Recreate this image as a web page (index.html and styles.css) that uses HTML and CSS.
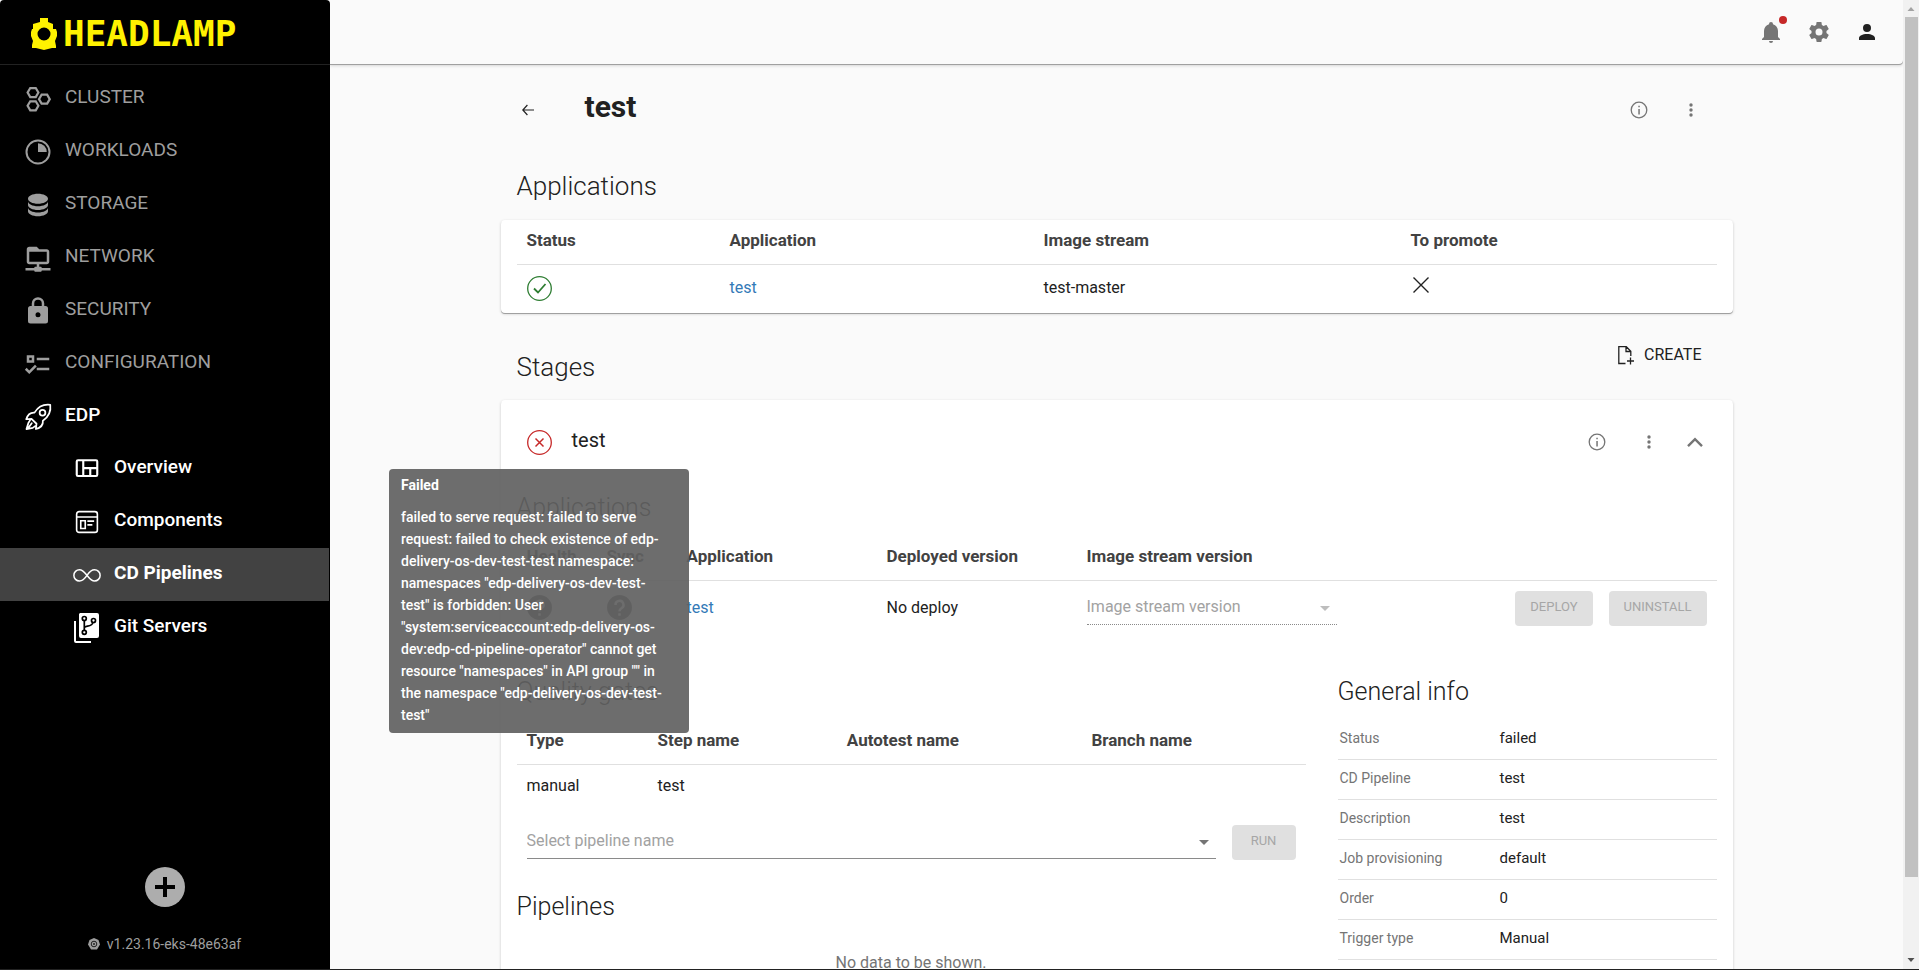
FILE: index.html
```html
<!DOCTYPE html>
<html lang="en">
<head>
<meta charset="utf-8">
<title>Headlamp - CD Pipelines</title>
<link rel="stylesheet" href="styles.css">
</head>
<body>
<div class="app">
  <aside class="sidebar">
    <div class="brand">
      <svg class="brand-mark" viewBox="0 0 26 32" aria-hidden="true"><path fill="#fff200" fill-rule="evenodd" d="M9 0h8v4l5 2v5h3l1 3v4l-2 5 1 5v2h-4l-8 2-8-2H1v-3l1-4-2-5v-4l1-3h1V6l7-2zM13 9.500a6.500 6.500 0 1 0 0 13 6.500 6.500 0 1 0 0-13z"/></svg>
      <span class="brand-name">HEADLAMP</span>
    </div>
    <nav class="nav" aria-label="Main">
      <a class="nav-item" href="#"><svg class="nav-icon" viewBox="0 0 24 24" fill="none" stroke="currentColor" stroke-width="1.800"><path d="M5.800 3.200h4.400l2.100 3.600-2.100 3.600H5.800L3.700 6.800zM5.800 13.800h4.400l2.100 3.600-2.100 3.600H5.800l-2.100-3.600zM14.900 8.500h4.400l2.100 3.600-2.100 3.600h-4.400l-2.100-3.600z"/></svg><span class="nav-text">CLUSTER</span></a>
      <a class="nav-item" href="#"><svg class="nav-icon" viewBox="0 0 24 24"><circle cx="12" cy="12" r="9.200" fill="none" stroke="currentColor" stroke-width="1.600"/><path fill="currentColor" d="M12 12V5a7 7 0 0 1 7 7z"/></svg><span class="nav-text">WORKLOADS</span></a>
      <a class="nav-item" href="#"><svg class="nav-icon" viewBox="0 0 24 24" fill="currentColor"><path d="M12,3C7.580,3 4,4.790 4,7C4,9.210 7.580,11 12,11C16.420,11 20,9.210 20,7C20,4.790 16.420,3 12,3M4,9V12C4,14.210 7.580,16 12,16C16.420,16 20,14.210 20,12V9C20,11.210 16.420,13 12,13C7.580,13 4,11.210 4,9M4,14V17C4,19.210 7.580,21 12,21C16.420,21 20,19.210 20,17V14C20,16.210 16.420,18 12,18C7.580,18 4,16.210 4,14Z"/></svg><span class="nav-text">STORAGE</span></a>
      <a class="nav-item" href="#"><svg class="nav-icon" viewBox="0 0 24 24" fill="currentColor"><path d="M15 20C15 19.450 14.550 19 14 19H13V17H19C20.110 17 21 16.110 21 15V7C21 5.900 20.110 5 19 5H13L11 3H5C3.900 3 3 3.900 3 5V15C3 16.110 3.900 17 5 17H11V19H10C9.450 19 9 19.450 9 20H2V22H9C9 22.550 9.450 23 10 23H14C14.550 23 15 22.550 15 22H22V20H15M5 15V7H19V15H5Z"/></svg><span class="nav-text">NETWORK</span></a>
      <a class="nav-item" href="#"><svg class="nav-icon" viewBox="0 0 24 24" fill="currentColor"><path d="M12,17A2,2 0 0,0 14,15C14,13.890 13.100,13 12,13A2,2 0 0,0 10,15A2,2 0 0,0 12,17M18,8A2,2 0 0,1 20,10V20A2,2 0 0,1 18,22H6A2,2 0 0,1 4,20V10C4,8.890 4.900,8 6,8H7V6A5,5 0 0,1 12,1A5,5 0 0,1 17,6V8H18M12,3A3,3 0 0,0 9,6V8H15V6A3,3 0 0,0 12,3Z"/></svg><span class="nav-text">SECURITY</span></a>
      <a class="nav-item" href="#"><svg class="nav-icon" viewBox="0 0 24 24" fill="currentColor"><path d="M3,5H9V11H3V5M5,7V9H7V7H5M11,7H21V9H11V7M11,15H21V17H11V15M5,20L1.500,16.500L2.910,15.090L5,17.170L9.590,12.590L11,14L5,20Z"/></svg><span class="nav-text">CONFIGURATION</span></a>
      <a class="nav-item nav-open" href="#"><svg class="nav-icon" viewBox="0 0 24 24" fill="none" stroke="currentColor" stroke-width="1.400" stroke-linejoin="round" stroke-linecap="round"><path d="M21.800 2.300c-5-.6-9.700 1.600-12.600 6.200-3-.2-5.300.9-6.600 5.300l4.200-.3 4 3.900-.5 4.200c4.500-1.200 5.900-3.700 5.600-6.600 4.400-3 6.600-7.600 5.900-12.700zM5.700 14.500l-1.400 2.300-1.500 4.900 5-1 2.200-1.600M4 21l3-4"/><circle cx="15.600" cy="8.500" r="2.300"/></svg><span class="nav-text">EDP</span></a>
      <a class="nav-item nav-sub" href="#"><svg class="nav-icon" viewBox="0 0 24 24" fill="none" stroke="currentColor" stroke-width="1.700"><rect x="3.800" y="5" width="16.400" height="12.600" rx="1"/><path d="M9 5v12.600M9 11.300h11.200M14.600 11.300v6.300"/></svg><span class="nav-text">Overview</span></a>
      <a class="nav-item nav-sub" href="#"><svg class="nav-icon" viewBox="0 0 24 24" fill="none" stroke="currentColor" stroke-width="1.300"><rect x="3.700" y="3.700" width="16.600" height="16.600" rx="2"/><path d="M3.700 8h16.600M7 11h3.600v6.200H7zM12.300 11.300h5.400M12.300 14.300h4"/></svg><span class="nav-text">Components</span></a>
      <a class="nav-item nav-sub nav-current" href="#" aria-current="page"><svg class="nav-icon" viewBox="0 0 24 24" fill="none" stroke="currentColor" stroke-width="1.200"><path d="M12 12.300C10 9.800 8.600 7.800 6 7.800a4.500 4.500 0 1 0 0 9c2.600 0 4.300-2 6-4.500s3.400-4.500 6-4.500a4.500 4.500 0 1 1 0 9c-2.600 0-4-2-6-4.500z"/></svg><span class="nav-text">CD Pipelines</span></a>
      <a class="nav-item nav-sub" href="#"><svg class="nav-icon" viewBox="0 0 30 30"><path fill="currentColor" d="M8 0h17a2 2 0 0 1 2 2v21a2 2 0 0 1-2 2H9a2 2 0 0 1-2-2V1zM2 8h2v20h15v2H4a2 2 0 0 1-2-2z"/><g fill="none" stroke="#000" stroke-width="1.700"><circle cx="12.300" cy="5.500" r="2"/><circle cx="12.300" cy="19.300" r="2"/><circle cx="21.500" cy="7.500" r="2"/><path d="M12.300 7.500v9.800M12.300 15c0-2.500 8-1 8.600-5.500"/></g></svg><span class="nav-text">Git Servers</span></a>
    </nav>
    <footer class="sidebar-foot">
      <button class="add" type="button" aria-label="Add cluster"><svg class="add-icon" viewBox="0 0 20 20"><path fill="#000" d="M8 0h4v8h8v4h-8v8H8v-8H0V8h8z"/></svg></button>
      <div class="version">
        <svg class="version-icon" viewBox="0 0 12 12"><path fill="currentColor" d="M6 0l4.500 2L12 6.500 9 11.500H3L0 6.500 1.500 2z"/><circle cx="6" cy="6" r="2.800" fill="none" stroke="#222" stroke-width="1"/><circle cx="6" cy="6" r="1" fill="#222"/></svg>
        <span>v1.23.16-eks-48e63af</span>
      </div>
    </footer>
  </aside>

  <div class="page">
    <header class="topbar">
      <button class="top-btn" type="button" aria-label="Notifications"><svg class="icon-24" viewBox="0 0 24 24" fill="currentColor"><path d="M21,19V20H3V19L5,17V11C5,7.900 7.030,5.170 10,4.290C10,4.190 10,4.100 10,4A2,2 0 0,1 12,2A2,2 0 0,1 14,4C14,4.100 14,4.190 14,4.290C16.970,5.170 19,7.900 19,11V17L21,19M14,21A2,2 0 0,1 12,23A2,2 0 0,1 10,21"/></svg><span class="badge"></span></button>
      <button class="top-btn" type="button" aria-label="Settings"><svg class="icon-24" viewBox="0 0 24 24" fill="currentColor"><path d="M12,15.500A3.500,3.500 0 0,1 8.500,12A3.500,3.500 0 0,1 12,8.500A3.500,3.500 0 0,1 15.500,12A3.500,3.500 0 0,1 12,15.500M19.430,12.970C19.470,12.650 19.500,12.330 19.500,12C19.500,11.670 19.470,11.340 19.430,11L21.540,9.370C21.730,9.220 21.780,8.950 21.660,8.730L19.660,5.270C19.540,5.050 19.270,4.960 19.050,5.050L16.560,6.050C16.040,5.660 15.500,5.320 14.870,5.070L14.500,2.420C14.460,2.180 14.250,2 14,2H10C9.750,2 9.540,2.180 9.500,2.420L9.130,5.070C8.500,5.320 7.960,5.660 7.440,6.050L4.950,5.050C4.730,4.960 4.460,5.050 4.340,5.270L2.340,8.730C2.210,8.950 2.270,9.220 2.460,9.370L4.570,11C4.530,11.340 4.500,11.670 4.500,12C4.500,12.330 4.530,12.650 4.570,12.970L2.460,14.630C2.270,14.780 2.210,15.050 2.340,15.270L4.340,18.730C4.460,18.950 4.730,19.030 4.950,18.950L7.440,17.940C7.960,18.340 8.500,18.680 9.130,18.930L9.500,21.580C9.540,21.820 9.750,22 10,22H14C14.250,22 14.460,21.820 14.500,21.580L14.870,18.930C15.500,18.670 16.040,18.340 16.560,17.940L19.050,18.950C19.270,19.030 19.540,18.950 19.660,18.730L21.660,15.270C21.780,15.050 21.730,14.780 21.540,14.630L19.430,12.970Z"/></svg></button>
      <button class="top-btn top-user" type="button" aria-label="Account"><svg class="icon-24" viewBox="0 0 24 24" fill="currentColor"><path d="M12,4A4,4 0 0,1 16,8A4,4 0 0,1 12,12A4,4 0 0,1 8,8A4,4 0 0,1 12,4M12,14C16.420,14 20,15.790 20,18V20H4V18C4,15.790 7.580,14 12,14Z"/></svg></button>
    </header>

    <main class="content">
      <div class="page-head">
        <button class="back" type="button" aria-label="Back"><svg class="back-icon" viewBox="0 0 12 12" fill="none" stroke="currentColor" stroke-width="1.200"><path d="M12 6H.8M5.400 1L.8 6l4.600 5"/></svg></button>
        <h1 class="title">test</h1>
        <div class="actions">
          <button class="icon-btn" type="button" aria-label="Info"><svg class="icon-18" viewBox="0 0 18 18"><circle cx="9" cy="9" r="7.800" fill="none" stroke="currentColor" stroke-width="1.300"/><path fill="currentColor" d="M8.300 8h1.500v5.500H8.300zM8.300 4.700h1.500v1.500H8.300z"/></svg></button>
          <button class="icon-btn" type="button" aria-label="More"><svg class="icon-18" viewBox="0 0 18 18" fill="currentColor"><circle cx="9" cy="4" r="1.700"/><circle cx="9" cy="9" r="1.700"/><circle cx="9" cy="14" r="1.700"/></svg></button>
        </div>
      </div>

      <h2 class="heading heading-page">Applications</h2>
      <section class="card">
        <table class="table table-apps">
          <thead><tr><th class="w-status">Status</th><th class="w-app">Application</th><th class="w-stream">Image stream</th><th>To promote</th></tr></thead>
          <tbody><tr>
            <td><svg class="status ok" viewBox="0 0 25 25" fill="none" stroke="currentColor"><circle cx="12.500" cy="12.500" r="11.800" stroke-width="1.300"/><path stroke-width="1.800" d="M7 12.500l4 4 7.500-8.500"/></svg></td>
            <td><a class="link" href="#">test</a></td>
            <td>test-master</td>
            <td class="cell-cross"><svg class="cross" viewBox="0 0 16 16" fill="none" stroke="#212121" stroke-width="1.400"><path d="M.5.5l15 15M15.500.5l-15 15"/></svg></td>
          </tr></tbody>
        </table>
      </section>

      <div class="stages-head">
        <h2 class="heading heading-stages">Stages</h2>
        <button class="create" type="button"><svg class="create-icon" viewBox="0 0 16 19" fill="none" stroke="currentColor" stroke-width="1.300"><path d="M7.500 17.500H.8V.7h7.500l4.500 4.500V10M8 .7v4.800h4.800M12.500 11.500v7M9 15h7"/></svg>CREATE</button>
      </div>

      <section class="card">
        <div class="stage-head">
          <div class="status-anchor">
            <svg class="status bad" viewBox="0 0 25 25" fill="none" stroke="currentColor"><circle cx="12.500" cy="12.500" r="11.800" stroke-width="1.300"/><path stroke-width="1.500" d="M8.500 8.500l8 8M16.500 8.500l-8 8"/></svg>
            <div class="tooltip" role="tooltip">
              <strong class="tip-title">Failed</strong>
              <p class="tip-text">failed to serve request: failed to serve<br>request: failed to check existence of edp-<br>delivery-os-dev-test-test namespace:<br>namespaces "edp-delivery-os-dev-test-<br>test" is forbidden: User<br>"system:serviceaccount:edp-delivery-os-<br>dev:edp-cd-pipeline-operator" cannot get<br>resource "namespaces" in API group "" in<br>the namespace "edp-delivery-os-dev-test-<br>test"</p>
            </div>
          </div>
          <h3 class="stage-name">test</h3>
          <div class="actions actions-stage">
            <button class="icon-btn" type="button" aria-label="Stage info"><svg class="icon-18" viewBox="0 0 18 18"><circle cx="9" cy="9" r="7.800" fill="none" stroke="currentColor" stroke-width="1.300"/><path fill="currentColor" d="M8.300 8h1.500v5.500H8.300zM8.300 4.700h1.500v1.500H8.300z"/></svg></button>
            <button class="icon-btn" type="button" aria-label="Stage actions"><svg class="icon-18" viewBox="0 0 18 18" fill="currentColor"><circle cx="9" cy="4" r="1.700"/><circle cx="9" cy="9" r="1.700"/><circle cx="9" cy="14" r="1.700"/></svg></button>
            <button class="icon-btn icon-btn-fold" type="button" aria-label="Collapse"><svg class="icon-18" viewBox="0 0 18 18" fill="none" stroke="currentColor" stroke-width="2.400"><path d="M2 13.200l7-7 7 7"/></svg></button>
          </div>
        </div>

        <h3 class="heading">Applications</h3>
        <table class="table table-deploy">
          <thead><tr><th class="w-80">Health</th><th class="w-80">Sync</th><th class="w-200">Application</th><th class="w-200">Deployed version</th><th class="w-270">Image stream version</th><th></th></tr></thead>
          <tbody><tr>
            <td><svg class="status unknown" viewBox="0 0 25 25"><circle cx="12.500" cy="12.500" r="12.500" fill="currentColor"/><path fill="none" stroke="#fff" stroke-width="2.400" d="M8.500 10a4 4 0 1 1 6 3.300c-1.500.9-2 1.400-2 3M12.500 18.200v2.600"/></svg></td>
            <td><svg class="status unknown" viewBox="0 0 25 25"><circle cx="12.500" cy="12.500" r="12.500" fill="currentColor"/><path fill="none" stroke="#fff" stroke-width="2.400" d="M8.500 10a4 4 0 1 1 6 3.300c-1.500.9-2 1.400-2 3M12.500 18.200v2.600"/></svg></td>
            <td><a class="link" href="#">test</a></td>
            <td>No deploy</td>
            <td class="cell-mid"><div class="field field-off"><select class="select" aria-label="Image stream version" disabled><option>Image stream version</option></select><svg class="caret" viewBox="0 0 10 5"><path fill="currentColor" d="M0 0h10L5 5z"/></svg></div></td>
            <td class="cell-mid"><div class="buttons"><button class="btn" type="button" disabled>DEPLOY</button><button class="btn" type="button" disabled>UNINSTALL</button></div></td>
          </tr></tbody>
        </table>

        <div class="columns">
          <div>
            <h3 class="heading">Quality gates</h3>
            <table class="table table-gates">
              <thead><tr><th class="w-type">Type</th><th class="w-step">Step name</th><th class="w-autotest">Autotest name</th><th>Branch name</th></tr></thead>
              <tbody><tr><td>manual</td><td>test</td><td></td><td></td></tr></tbody>
            </table>
            <div class="run-row">
              <div class="field field-grow"><select class="select" aria-label="Pipeline name"><option>Select pipeline name</option></select><svg class="caret" viewBox="0 0 10 5"><path fill="currentColor" d="M0 0h10L5 5z"/></svg></div>
              <button class="btn btn-run" type="button" disabled>RUN</button>
            </div>
            <h3 class="heading">Pipelines</h3>
            <p class="empty">No data to be shown.</p>
          </div>
          <div>
            <h3 class="heading">General info</h3>
            <table class="info">
              <tbody>
                <tr><th scope="row">Status</th><td>failed</td></tr>
                <tr><th scope="row">CD Pipeline</th><td>test</td></tr>
                <tr><th scope="row">Description</th><td>test</td></tr>
                <tr><th scope="row">Job provisioning</th><td>default</td></tr>
                <tr><th scope="row">Order</th><td>0</td></tr>
                <tr><th scope="row">Trigger type</th><td>Manual</td></tr>
              </tbody>
            </table>
          </div>
        </div>
      </section>
    </main>
  </div>

  <div class="scrollbar" aria-hidden="true">
    <svg class="scroll-arrow" viewBox="0 0 16 17"><path fill="#a3a3a3" d="M4.500 11h7L8 7z"/></svg>
    <div class="scroll-track"><div class="scroll-thumb"></div></div>
    <svg class="scroll-arrow" viewBox="0 0 16 17"><path fill="#505050" d="M4.500 6h7L8 10z"/></svg>
  </div>
</div>
</body>
</html>
```

FILE: styles.css
```css
* { box-sizing: border-box; }

body {
  margin: 0;
  background: #fafafa;
  color: #212121;
  font-family: Roboto, "Liberation Sans", sans-serif;
  font-size: 16px;
  line-height: 24px;
}

h1, h2, h3, p { margin: 0; }
a { color: inherit; text-decoration: none; }
svg { display: block; flex: none; }

button {
  margin: 0;
  padding: 0;
  border: 0;
  background: none;
  color: inherit;
  font: inherit;
}

.app {
  display: flex;
  height: 100vh;
  overflow: hidden;
  border-bottom: 1px solid #222;
}

/* Sidebar */
.sidebar {
  display: flex;
  flex: none;
  flex-direction: column;
  width: 330px;
  border-radius: 4px 4px 0 0;
  background: #000;
  color: #9e9e9e;
}

.brand {
  display: flex;
  align-items: center;
  gap: 6px;
  height: 65px;
  padding: 3px 0 0 31px;
  border-bottom: 1px solid #222;
}

.brand-mark { width: 26px; height: 32px; }

.brand-name {
  color: #fff200;
  font: bold 36px/36px "DejaVu Sans Mono", monospace;
}

.nav { padding-top: 6px; }

.nav-item {
  display: flex;
  align-items: center;
  gap: 12px;
  height: 53px;
  margin-right: 1px;
  padding: 3px 0 0 23px;
  font-size: 19px;
}

.nav-icon { width: 30px; height: 30px; }
.nav-text { padding-bottom: 4px; }
.nav-open { color: #fff; font-weight: 500; }
.nav-sub { padding: 1px 0 0 72px; color: #fff; font-weight: 500; }
.nav-current { background: #424242; font-weight: 700; }

.sidebar-foot {
  display: flex;
  flex-direction: column;
  align-items: center;
  gap: 25px;
  margin-top: auto;
  padding-right: 1px;
  padding-bottom: 13px;
}

.add {
  display: grid;
  place-items: center;
  width: 40px;
  height: 40px;
  border-radius: 50%;
  background: #adadad;
}

.add-icon { width: 20px; height: 20px; }

.version {
  display: flex;
  align-items: center;
  gap: 7px;
  font-size: 14px;
}

.version-icon { width: 12px; height: 12px; }

/* Page */
.page { flex: 1; min-width: 0; }

.topbar {
  display: flex;
  justify-content: flex-end;
  align-items: center;
  height: 64px;
  padding-right: 12px;
  border-radius: 0 0 4px 0;
  box-shadow: 0 1px 0 #a0a0a0, 0 2px 3px rgba(0, 0, 0, .14);
  color: #757575;
}

.top-btn {
  position: relative;
  display: grid;
  place-items: center;
  width: 48px;
  height: 48px;
}

.top-user { color: #212121; }
.icon-24 { width: 24px; height: 24px; }
.icon-18 { width: 18px; height: 18px; }

.badge {
  position: absolute;
  top: 8px;
  right: 8px;
  width: 8px;
  height: 8px;
  border-radius: 50%;
  background: #c62828;
}

.content {
  max-width: 1280px;
  margin: 0 auto;
  padding: 26px 24px 0;
}

.page-head {
  display: flex;
  align-items: center;
  height: 40px;
  padding: 0 16px 0 7px;
}

.back {
  display: grid;
  place-items: center;
  width: 40px;
  height: 40px;
}

.back-icon { width: 12px; height: 12px; }

.title {
  padding: 0 0 6px 37px;
  font-size: 30px;
  font-weight: 700;
  line-height: 36px;
}

.actions { display: flex; margin-left: auto; color: #757575; }
.actions-stage { padding-bottom: 2px; }

.icon-btn {
  display: grid;
  place-items: center;
  width: 52px;
  height: 40px;
}

.icon-btn-fold { width: 40px; }

.heading {
  margin-bottom: 12px;
  padding-top: 2px;
  font-size: 25px;
  font-weight: 300;
  line-height: 32px;
}

.heading-page, .heading-stages { padding: 0 0 0 16px; font-size: 26px; }
.heading-page { margin: 40px 0 18px; }
.heading-stages { margin: 14px 0 0; }

.card {
  padding: 0 16px;
  border-radius: 4px;
  background: #fff;
  box-shadow: 0 1px 0 #a0a0a0, 0 1px 3px rgba(0, 0, 0, .2);
}

/* Tables */
.table {
  width: 100%;
  border-collapse: separate;
  border-spacing: 0;
  table-layout: fixed;
}

.table th {
  height: 45px;
  padding: 0 10px 4px;
  border-bottom: 1px solid #e0e0e0;
  color: #424242;
  font-size: 17px;
  font-weight: 700;
  text-align: left;
}

.table td { padding: 0 10px 2px; }
.table-apps td { height: 48px; }
.table-deploy td { height: 55px; }
.table-gates td { height: 43px; }
.table td.cell-mid { padding-bottom: 0; }
.table td.cell-cross { padding-bottom: 8px; }

.w-status { width: 203px; }
.w-app { width: 314px; }
.w-stream { width: 367px; }
.w-80 { width: 80px; }
.w-200 { width: 200px; }
.w-270 { width: 270px; }
.w-type { width: 131px; }
.w-step { width: 24%; }
.w-autotest { width: 31%; }

.status { width: 25px; height: 25px; }
.ok { color: #2e7d32; }
.bad { color: #c62828; }
.unknown { color: #616161; }
.cross { width: 16px; height: 16px; margin-left: 2px; }
.link { color: #337ab7; }

/* Stages */
.stages-head {
  display: flex;
  justify-content: space-between;
  align-items: flex-start;
  margin: 24px 0 17px;
}

.create {
  display: flex;
  align-items: center;
  gap: 10px;
  height: 36px;
  padding-right: 31px;
}

.create-icon { width: 16px; height: 19px; }

.stage-head {
  display: flex;
  align-items: center;
  height: 85px;
  margin-bottom: 5px;
  padding: 0 2px 0 10px;
}

.stage-name {
  padding: 0 0 6px 20px;
  font-size: 20px;
  font-weight: 400;
}

.status-anchor { position: relative; }

.tooltip {
  position: absolute;
  z-index: 2;
  top: 39px;
  left: 50%;
  width: 300px;
  margin-left: -150px;
  padding: 5px 12px 7px;
  border-radius: 4px;
  background: rgba(97, 97, 97, .92);
  color: #fff;
  font-size: 14px;
  font-weight: 500;
  line-height: 22px;
  white-space: nowrap;
}

.tip-title { display: block; margin-bottom: 10px; font-weight: 700; }

.columns {
  display: grid;
  grid-template-columns: minmax(0, 789fr) minmax(0, 379fr);
  gap: 32px;
  padding-top: 38px;
}

.field {
  position: relative;
  border-bottom: 1px solid #8a8a8a;
}

.field-off { border-bottom-style: dotted; color: #bdbdbd; }
.field-grow { flex: 1; }

.select {
  display: block;
  width: 100%;
  height: 31px;
  padding: 0 24px 2px 0;
  border: 0;
  background: none;
  color: #a2a2a2;
  font: inherit;
  appearance: none;
  opacity: 1;
}

.caret {
  position: absolute;
  right: 7px;
  bottom: 13px;
  width: 10px;
  height: 5px;
  color: #757575;
}

.field-off .caret { color: #bdbdbd; }

.buttons { display: flex; justify-content: flex-end; gap: 16px; }

.btn {
  height: 35px;
  padding: 0 15px 4px;
  border-radius: 4px;
  background: #e0e0e0;
  color: #a6a6a6;
  font-size: 13px;
}

.btn-run { width: 64px; }

.run-row {
  display: flex;
  align-items: center;
  gap: 16px;
  height: 69px;
  margin-bottom: 12px;
  padding: 0 10px;
}

.empty { padding-top: 16px; color: #757575; text-align: center; }

.info {
  width: 100%;
  border-collapse: separate;
  border-spacing: 0;
}

.info th, .info td {
  height: 40px;
  padding: 0 2px 3px;
  border-bottom: 1px solid #e0e0e0;
  font-size: 15px;
  text-align: left;
}

.info th {
  width: 160px;
  color: #757575;
  font-size: 14px;
  font-weight: 400;
}

/* Window scrollbar */
.scrollbar {
  display: flex;
  flex: none;
  flex-direction: column;
  width: 16px;
  background: #f1f1f1;
}

.scroll-arrow { width: 16px; height: 17px; }
.scroll-track { flex: 1; padding: 0 1px 0 2px; }
.scroll-thumb { height: 92%; background: #c1c1c1; }
```
